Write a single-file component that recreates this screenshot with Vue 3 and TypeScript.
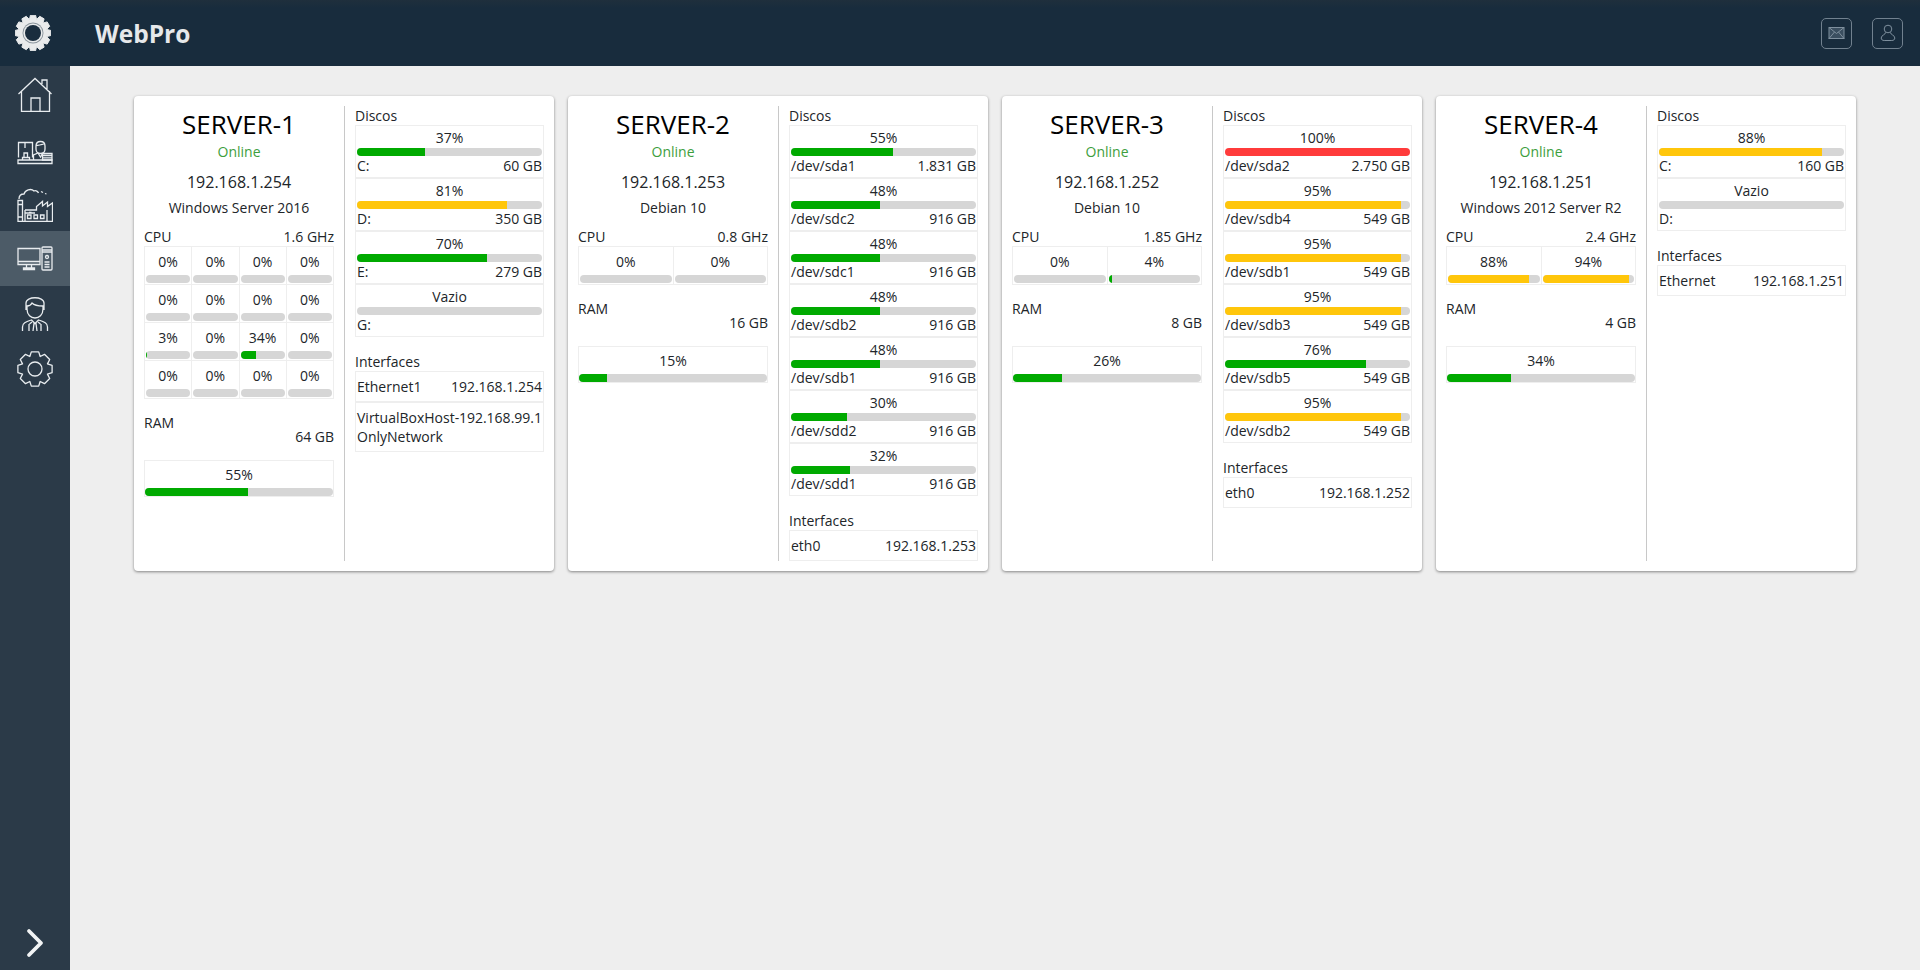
<script setup lang="ts">
interface Disk {
  pct: number | null;
  name: string;
  size: string;
}

interface Iface {
  name: string;
  ip: string;
}

interface Server {
  name: string;
  ip: string;
  os: string;
  ghz: string;
  cores: number[];
  ramSize: string;
  ram: number;
  disks: Disk[];
  ifaces: Iface[];
}

const servers: Server[] = [
  {
    name: 'SERVER-1',
    ip: '192.168.1.254',
    os: 'Windows Server 2016',
    ghz: '1.6 GHz',
    cores: [0, 0, 0, 0, 0, 0, 0, 0, 3, 0, 34, 0, 0, 0, 0, 0],
    ramSize: '64 GB',
    ram: 55,
    disks: [
      { pct: 37, name: 'C:', size: '60 GB' },
      { pct: 81, name: 'D:', size: '350 GB' },
      { pct: 70, name: 'E:', size: '279 GB' },
      { pct: null, name: 'G:', size: '' },
    ],
    ifaces: [
      { name: 'Ethernet1', ip: '192.168.1.254' },
      { name: 'VirtualBoxHost-OnlyNetwork', ip: '192.168.99.1' },
    ],
  },
  {
    name: 'SERVER-2',
    ip: '192.168.1.253',
    os: 'Debian 10',
    ghz: '0.8 GHz',
    cores: [0, 0],
    ramSize: '16 GB',
    ram: 15,
    disks: [
      { pct: 55, name: '/dev/sda1', size: '1.831 GB' },
      { pct: 48, name: '/dev/sdc2', size: '916 GB' },
      { pct: 48, name: '/dev/sdc1', size: '916 GB' },
      { pct: 48, name: '/dev/sdb2', size: '916 GB' },
      { pct: 48, name: '/dev/sdb1', size: '916 GB' },
      { pct: 30, name: '/dev/sdd2', size: '916 GB' },
      { pct: 32, name: '/dev/sdd1', size: '916 GB' },
    ],
    ifaces: [{ name: 'eth0', ip: '192.168.1.253' }],
  },
  {
    name: 'SERVER-3',
    ip: '192.168.1.252',
    os: 'Debian 10',
    ghz: '1.85 GHz',
    cores: [0, 4],
    ramSize: '8 GB',
    ram: 26,
    disks: [
      { pct: 100, name: '/dev/sda2', size: '2.750 GB' },
      { pct: 95, name: '/dev/sdb4', size: '549 GB' },
      { pct: 95, name: '/dev/sdb1', size: '549 GB' },
      { pct: 95, name: '/dev/sdb3', size: '549 GB' },
      { pct: 76, name: '/dev/sdb5', size: '549 GB' },
      { pct: 95, name: '/dev/sdb2', size: '549 GB' },
    ],
    ifaces: [{ name: 'eth0', ip: '192.168.1.252' }],
  },
  {
    name: 'SERVER-4',
    ip: '192.168.1.251',
    os: 'Windows 2012 Server R2',
    ghz: '2.4 GHz',
    cores: [88, 94],
    ramSize: '4 GB',
    ram: 34,
    disks: [
      { pct: 88, name: 'C:', size: '160 GB' },
      { pct: null, name: 'D:', size: '' },
    ],
    ifaces: [{ name: 'Ethernet', ip: '192.168.1.251' }],
  },
];

const barColor = (pct: number) => {
  if (pct >= 100) return '#ff3b3b';
  if (pct >= 80) return '#ffc60b';
  return '#00aa00';
};

// gear outline, used for the logo and the settings item
const gearPath = (cx: number, cy: number, outer: number, inner: number, teeth: number) => {
  const step = (Math.PI * 2) / teeth;
  const pts: string[] = [];
  for (let i = 0; i < teeth; i++) {
    const a = i * step - Math.PI / 2;
    const offs: [number, number][] = [
      [-0.5, inner],
      [-0.27, outer],
      [0.27, outer],
      [0.5, inner],
    ];
    for (const [o, r] of offs) {
      const t = a + o * step;
      pts.push(`${(cx + Math.cos(t) * r).toFixed(2)} ${(cy + Math.sin(t) * r).toFixed(2)}`);
    }
  }
  return 'M' + pts.join('L') + 'Z';
};

const logoGear = gearPath(18, 18, 18, 14, 12);
const settingsGear = gearPath(18, 18, 17.5, 13.5, 8);
</script>

<template>
  <div class="app">
    <header class="topbar">
      <div class="logo">
        <svg width="36" height="36" viewBox="0 0 36 36">
          <path :d="logoGear" fill="#e9ebec" stroke="#e9ebec" stroke-width="1" stroke-linejoin="round" />
          <circle cx="18" cy="18" r="10.5" fill="#8a949c" />
          <circle cx="18" cy="18" r="9.6" fill="#e9ebec" />
          <circle cx="18" cy="18" r="8" fill="#1a2d3e" />
        </svg>
      </div>
      <div class="brand">WebPro</div>
      <div class="top-actions">
        <button class="top-btn">
          <svg width="18" height="14" viewBox="0 0 18 14" fill="none" stroke="#7f909e" stroke-width="1">
            <rect x="1" y="1.5" width="15" height="11" fill="#3b4f60" />
            <path d="M1 1.5l7.5 6 7.5-6M1 12.5l5.5-6.5M16 12.5l-5.5-6.5" />
          </svg>
        </button>
        <button class="top-btn">
          <svg width="16" height="18" viewBox="0 0 16 18" fill="none" stroke="#7f909e" stroke-width="1">
            <circle cx="8" cy="5" r="3.8" />
            <path d="M5.5 8.5C5.5 11 1.2 11 1.2 14c0 1.8 1.4 2.5 3 2.5h7.6c1.6 0 3-.7 3-2.5 0-3-4.3-3-4.3-5.5" />
          </svg>
        </button>
      </div>
    </header>

    <div class="body-row">
      <nav class="sidebar">
        <div class="nav-item">
          <svg class="nav-icon" viewBox="0 0 36 36">
            <path d="M1.5 18L18 2.5 34.5 18M4.5 15v20.500h28V15M14 35.500V22h9v13.500M25 8V4h5v9" />
          </svg>
        </div>
        <div class="nav-item">
          <svg class="nav-icon" viewBox="0 0 36 36">
            <path d="M1 32.500h34v-3.500H1zM1.500 26.500V11.500h14v15M8 12v5M7 26.500V22h3.500v4.500M5.500 29v-2.500h7V29" />
            <path d="M19 15c0-6 9-6 9 0v3c0 6-9 6-9 0zM19 14.500c3 0 6-1 9-2M16.500 29v-5l4.500-2 2.500 4 2.500-4 1.500 1" />
            <path d="M25.500 22.500h9.500v6.500h-9.500zM25.500 24.500h9.500M25.500 26.800h9.500" />
          </svg>
        </div>
        <div class="nav-item">
          <svg class="nav-icon" viewBox="0 0 36 36">
            <path d="M1 14.500h4.500v21H1zM1 18.500h4.500M1 31h4.500" />
            <path d="M2 13c0-4 3-5 5-5 1-4 7-6 10-3 2-1 4 .5 4.500 2M24 5.500l2 1M28 7.500l1.500 .5" />
            <path d="M5.500 35.500h30V17l-5 3.500V16l-5 4v-4.500l-6 5V24H8" />
            <path d="M8 24v11.500M8 27h10M12 26.500h2.500M10.500 29h3.500v3.500h-3.500zM17 29h3.500v3.500H17zM23.500 29H27v3.500h-3.500zM30 24v11.500" />
          </svg>
        </div>
        <div class="nav-item active">
          <svg class="nav-icon" viewBox="0 0 36 36">
            <path d="M1 7.500h22v16H1zM1 20.500h22M9.500 23.500v3.500M14.500 23.500v3.500M6.500 28.500v-1.500h11v1.500z" />
            <path d="M25 7c0-.5.500-1 1-1h8c.5 0 1 .5 1 1v21c0 .5-.5 1-1 1h-8c-.5 0-1-.5-1-1zM25 9h10M25 11h10M27.500 21h5M27.500 23.500h5M27.500 26h5" />
            <circle cx="30" cy="16" r="1.500" />
          </svg>
        </div>
        <div class="nav-item">
          <svg class="nav-icon" viewBox="0 0 36 36">
            <path d="M9 14V7c0-7 18-7 18 0v7M10 13c0 12 16 12 16 0v-3c-5 0-9-1-11-3-1 2-3 3-5 3z" />
            <path d="M5.500 35v-4c0-4 3-5 9-7l3.500 3.500 3.500-3.500c6 2 9 3 9 7v4M16 35l1-7.500h2l1 7.500M15 26l-2.500 2M21 26l2.500 2M12 28v7M24 28v7" />
          </svg>
        </div>
        <div class="nav-item">
          <svg class="nav-icon" viewBox="0 0 36 36">
            <path :d="settingsGear" stroke-linejoin="round" />
            <circle cx="18" cy="18" r="7" />
          </svg>
        </div>
        <div class="nav-toggle">
          <svg width="20" height="30" viewBox="0 0 20 30" fill="none" stroke="#f2f4f5" stroke-width="3.800" stroke-linecap="round" stroke-linejoin="round">
            <path d="M3 3l12 12L3 27" />
          </svg>
        </div>
      </nav>

      <main class="content">
        <section v-for="s in servers" :key="s.name" class="card">
          <div class="left">
            <h2 class="title">{{ s.name }}</h2>
            <div class="status">Online</div>
            <div class="ip">{{ s.ip }}</div>
            <div class="os">{{ s.os }}</div>

            <div class="cpu-head">
              <span>CPU</span>
              <span>{{ s.ghz }}</span>
            </div>
            <div class="cpu-grid" :class="s.cores.length > 2 ? 'four' : 'two'">
              <div v-for="(c, i) in s.cores" :key="i" class="cpu-cell">
                <div class="pct">{{ c }}%</div>
                <div class="bar">
                  <div class="fill" :style="{ width: c + '%', background: barColor(c) }"></div>
                </div>
              </div>
            </div>

            <div class="ram-label">RAM</div>
            <div class="ram-size">{{ s.ramSize }}</div>
            <div class="ram-box">
              <div class="pct">{{ s.ram }}%</div>
              <div class="bar">
                <div class="fill" :style="{ width: s.ram + '%', background: barColor(s.ram) }"></div>
              </div>
            </div>
          </div>

          <div class="right">
            <div class="section-label">Discos</div>
            <div v-for="d in s.disks" :key="d.name" class="disk">
              <div class="disk-pct">{{ d.pct === null ? 'Vazio' : d.pct + '%' }}</div>
              <div class="bar">
                <div
                  v-if="d.pct !== null"
                  class="fill"
                  :style="{ width: d.pct + '%', background: barColor(d.pct) }"
                ></div>
              </div>
              <div class="disk-info">
                <span>{{ d.name }}</span>
                <span>{{ d.size }}</span>
              </div>
            </div>

            <div class="section-label if-label">Interfaces</div>
            <div v-for="f in s.ifaces" :key="f.name" class="iface">
              <span class="if-name">{{ f.name }}</span>
              <span class="if-ip">{{ f.ip }}</span>
            </div>
          </div>
        </section>
      </main>
    </div>
  </div>
</template>

<style>
html,
body {
  margin: 0;
  background: #eeeeee;
}
</style>

<style scoped>
.app {
  height: 970px;
  display: flex;
  flex-direction: column;
  font-family: 'Open Sans', 'Liberation Sans', sans-serif;
  font-size: 14px;
  color: #212529;
  overflow: hidden;
}

.topbar {
  height: 66px;
  flex: none;
  display: flex;
  align-items: center;
  background: linear-gradient(#1f2f3c 0, #182c3d 8px);
}

.logo {
  width: 70px;
  margin-left: -2px;
  margin-right: 2px;
  display: flex;
  justify-content: center;
}

.brand {
  margin-left: 25px;
  font-size: 24.5px;
  font-weight: 700;
  color: #e6e8ea;
}

.top-actions {
  margin-left: auto;
  margin-right: 17px;
  display: flex;
  gap: 20px;
}

.top-btn {
  width: 31px;
  height: 31px;
  padding: 0;
  background: none;
  border: 1px solid #71818f;
  border-radius: 5px;
  display: flex;
  align-items: center;
  justify-content: center;
}

.body-row {
  flex: 1;
  display: flex;
  min-height: 0;
}

.sidebar {
  width: 70px;
  flex: none;
  display: flex;
  flex-direction: column;
  background: #2b3a48;
}

.nav-item {
  height: 55px;
  display: flex;
  align-items: center;
  justify-content: center;
}

.nav-item.active {
  background: #4c5b67;
}

.nav-icon {
  width: 36px;
  height: 36px;
  fill: none;
  stroke: #e8ecef;
  stroke-width: 1.3;
}

.nav-toggle {
  margin-top: auto;
  padding-bottom: 12px;
  padding-left: 1px;
  display: flex;
  justify-content: center;
}

.content {
  flex: 1;
  display: flex;
  align-items: flex-start;
  gap: 14px;
  padding: 30px 0 0 64px;
}

.card {
  width: 420px;
  height: 475px;
  box-sizing: border-box;
  flex: none;
  display: flex;
  padding: 10px;
  background: #fff;
  border-radius: 4px;
  box-shadow: 0 1px 3px rgba(0, 0, 0, 0.45);
}

.left {
  width: 201px;
  box-sizing: border-box;
  flex: none;
  padding-right: 10px;
  border-right: 1px solid #c8c8c8;
}

.title {
  margin: 0;
  font-size: 26px;
  font-weight: 400;
  line-height: 36px;
  padding-bottom: 2px;
  text-align: center;
  color: #000;
}

.status {
  line-height: 16px;
  text-align: center;
  color: #3d9e3d;
}

.ip {
  margin-top: 10px;
  font-size: 16px;
  line-height: 24px;
  text-align: center;
}

.os {
  margin-top: 4px;
  line-height: 20px;
  text-align: center;
}

.cpu-head {
  margin-top: 10px;
  line-height: 18px;
  display: flex;
  justify-content: space-between;
}

.cpu-grid {
  display: grid;
  border: 1px solid #eeeeee;
  border-right: none;
  border-bottom: none;
}

.cpu-grid.four {
  grid-template-columns: repeat(4, 1fr);
}

.cpu-grid.two {
  grid-template-columns: repeat(2, 1fr);
}

.cpu-cell {
  padding: 2px 1px 1px;
  border-right: 1px solid #eeeeee;
  border-bottom: 1px solid #eeeeee;
  min-width: 0;
}

.pct {
  line-height: 26px;
  text-align: center;
}

.bar {
  height: 8px;
  background: #d6d6d6;
  border-radius: 4px;
  overflow: hidden;
}

.fill {
  height: 100%;
}

.ram-label {
  margin-top: 16px;
  line-height: 16px;
}

.ram-size {
  line-height: 12px;
  text-align: right;
}

.ram-box {
  margin-top: 17px;
  padding-top: 1px;
  border: 1px solid #eeeeee;
}

.right {
  flex: 1;
  min-width: 0;
  padding-left: 10px;
}

.section-label {
  line-height: 19px;
}

.disk {
  height: 53px;
  box-sizing: border-box;
  padding: 1px;
  border: 1px solid #eeeeee;
}

.disk-pct {
  line-height: 21px;
  text-align: center;
}

.disk-info {
  line-height: 20px;
  display: flex;
  justify-content: space-between;
}

.if-label {
  margin-top: 15px;
}

.iface {
  padding: 5px 1px;
  border: 1px solid #eeeeee;
  line-height: 19px;
  display: flex;
  justify-content: space-between;
}

.if-name {
  min-width: 0;
}

.if-ip {
  flex: none;
  white-space: nowrap;
}
</style>
